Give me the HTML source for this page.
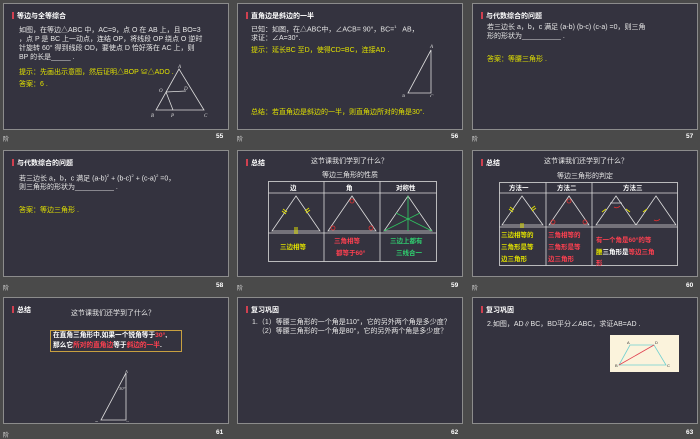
<!DOCTYPE html>
<html><head><meta charset="utf-8"><style>
*{margin:0;padding:0;box-sizing:border-box}
body{width:700px;height:438px;background:#4a4a4a;position:relative;overflow:hidden;font-family:"Liberation Sans","Noto Sans CJK SC",sans-serif;color:#e8e8e8}
.s{position:absolute;width:226px;height:127px;background:#34333f;border:1px solid #8c8c8c}
.s div,.s svg{position:absolute}
.t{font-size:7px;font-weight:bold;color:#fff;left:13px;top:7px}
.bar{position:absolute;left:-5px;top:1px;width:1.5px;height:7px;background:#d04050}
.tx{font-size:7px;line-height:9px;white-space:nowrap;color:#e6e6e6}
.y{color:#e0e000}
.r{color:#ff4050}
.g{color:#30d070}
.f{position:absolute;font-size:6px;color:#ddd}
.n{position:absolute;font-size:6.5px;font-weight:bold;color:#fff}
</style></head><body>

<!-- 55 -->
<div class="s" style="left:3px;top:3px">
<div class="t"><span class="bar"></span>等边与全等综合</div>
<div class="tx" style="left:15px;top:22px">如图，在等边△ABC 中，AC=9，点 O 在 AB 上，且 BO=3<br>，点 P 是 BC 上一动点，连结 OP，将线段 OP 绕点 O 逆时<br>针旋转 60° 得到线段 OD，要使点 D 恰好落在 AC 上，则<br>BP 的长是_____ .</div>
<div class="tx y" style="left:15px;top:64px">提示：先画出示意图，然后证明△BOP ≌△ADO .</div>
<div class="tx y" style="left:15px;top:76px">答案：6 .</div>
<svg style="left:145px;top:60px" width="62" height="55" viewBox="0 0 62 55"><g stroke="#ddd" stroke-width="0.8" fill="none"><path d="M30 5 L7 46 L55 46 Z M17 28 L37 27 M17 28 L24 46"/></g><g fill="#ddd" font-size="5" font-style="italic" font-family="Liberation Serif"><text x="29" y="4">A</text><text x="10" y="28">O</text><text x="35" y="26">D</text><text x="2" y="53">B</text><text x="22" y="53">P</text><text x="55" y="53">C</text></g></svg>
</div>
<div class="f" style="left:3px;top:134px">阶</div><div class="n" style="left:216px;top:133px">55</div>

<!-- 56 -->
<div class="s" style="left:237px;top:3px">
<div class="t"><span class="bar"></span>直角边是斜边的一半</div>
<div class="tx" style="left:13px;top:18px">已知：如图，在△ABC中，∠ACB= 90°，BC=<sup style="font-size:4px">1</sup>&nbsp;&nbsp;&nbsp;AB，<br>求证：∠A=30°.</div>
<div class="tx y" style="left:13px;top:42px">提示：延长BC 至D，使得CD=BC，连接AD .</div>
<svg style="left:160px;top:38px" width="50" height="55" viewBox="0 0 50 55"><g stroke="#ddd" stroke-width="0.8" fill="none"><path d="M33 8 L10 51 L33 51 Z"/></g><g fill="#ddd" font-size="5" font-style="italic" font-family="Liberation Serif"><text x="32" y="6">A</text><text x="4" y="56">B</text><text x="32" y="56">C</text></g></svg>
<div class="tx y" style="left:13px;top:104px">总结：若直角边是斜边的一半，则直角边所对的角是30°.</div>
</div>
<div class="f" style="left:237px;top:134px">阶</div><div class="n" style="left:451px;top:133px">56</div>

<!-- 57 -->
<div class="s" style="left:472px;top:3px">
<div class="t"><span class="bar"></span>与代数综合的问题</div>
<div class="tx" style="left:14px;top:19px">若三边长 a，b，c 满足 (a-b) (b-c) (c-a) =0，则三角<br>形的形状为__________ .</div>
<div class="tx y" style="left:14px;top:51px">答案：等腰三角形 .</div>
</div>
<div class="f" style="left:472px;top:134px">阶</div><div class="n" style="left:686px;top:133px">57</div>

<!-- 58 -->
<div class="s" style="left:3px;top:150px">
<div class="t"><span class="bar"></span>与代数综合的问题</div>
<div class="tx" style="left:15px;top:20px">若三边长 a，b，c 满足 (a-b)<sup style="font-size:4px">2</sup>&nbsp;+ (b-c)<sup style="font-size:4px">2</sup>&nbsp;+ (c-a)<sup style="font-size:4px">2</sup>&nbsp;=0，<br>则三角形的形状为__________ .</div>
<div class="tx y" style="left:15px;top:55px">答案：等边三角形 .</div>
</div>
<div class="f" style="left:3px;top:283px">阶</div><div class="n" style="left:216px;top:282px">58</div>

<!-- 59 -->
<div class="s" style="left:237px;top:150px">
<div class="t"><span class="bar"></span>总结</div>
<div class="tx" style="left:73px;top:6px">这节课我们学到了什么？</div>
<div class="tx" style="left:84px;top:20px">等边三角形的性质</div>
<svg style="left:30px;top:30px" width="170" height="82" viewBox="0 0 170 82"><g stroke="#ddd" stroke-width="0.8" fill="none"><rect x="0.5" y="0.5" width="168" height="80"/><path d="M56 0.5 V80.5 M112 0.5 V80.5 M0.5 12 H168.5 M0.5 52 H168.5"/><path d="M28 15 L4 50 L52 50 Z M84 15 L60 50 L108 50 Z M140 15 L116 50 L164 50 Z"/></g><g stroke="#e0e000" stroke-width="1"><path d="M14 30 l4 3 M15 28 l4 3 M38 32 l4 -3 M37 30 l4 -3 M27 46 v7 M29 46 v7"/></g><g stroke="#e03030" fill="none" stroke-width="0.8"><circle cx="84" cy="20" r="2"/><circle cx="65" cy="47" r="2"/><circle cx="103" cy="47" r="2"/></g><g stroke="#30c060" stroke-width="0.9"><path d="M140 15 V50 M116 50 L152 32 M164 50 L128 32"/></g><g font-size="6.5" font-weight="bold" fill="#fff"><text x="22" y="9">边</text><text x="78" y="9">角</text><text x="128" y="9">对称性</text></g><g font-size="6.5" font-weight="bold"><text x="12" y="68" fill="#e0e000">三边相等</text><text x="66" y="62" fill="#ff4050">三角相等</text><text x="68" y="74" fill="#ff4050">都等于60°</text><text x="122" y="62" fill="#30d070">三边上都有</text><text x="128" y="74" fill="#30d070">三线合一</text></g></svg>
</div>
<div class="f" style="left:237px;top:283px">阶</div><div class="n" style="left:451px;top:282px">59</div>

<!-- 60 -->
<div class="s" style="left:472px;top:150px">
<div class="t"><span class="bar"></span>总结</div>
<div class="tx" style="left:71px;top:6px">这节课我们还学到了什么？</div>
<div class="tx" style="left:84px;top:21px">等边三角形的判定</div>
<svg style="left:26px;top:31px" width="180" height="84" viewBox="0 0 180 84"><g stroke="#ddd" stroke-width="0.8" fill="none"><rect x="0.5" y="0.5" width="178" height="83"/><path d="M47 0.5 V83.5 M93 0.5 V83.5 M0.5 11 H178.5 M0.5 45 H178.5"/><path d="M23 14 L3 43 L44 43 Z M70 14 L50 43 L90 43 Z M117 14 L97 43 L137 43 Z M157 14 L137 43 L177 43 Z M111 21 H123"/></g><g stroke="#e0e000" stroke-width="1"><path d="M10 27 l4 3 M11 25 l4 3 M33 29 l4 -3 M32 27 l4 -3 M22 41 v5 M24 41 v5 M103 30 l4 -3 M127 27 l4 3 M144 30 l4 -3"/></g><g stroke="#e03030" fill="none" stroke-width="0.8"><circle cx="70" cy="19" r="2"/><circle cx="54" cy="40" r="2"/><circle cx="86" cy="40" r="2"/><path d="M115 25 q3 2 6 -1 M155 38 q3 2 6 -1"/></g><g font-size="6.5" font-weight="bold" fill="#fff"><text x="10" y="8">方法一</text><text x="58" y="8">方法二</text><text x="124" y="8">方法三</text></g><g font-size="6.5" font-weight="bold"><text x="2" y="55" fill="#e0e000">三边相等的</text><text x="2" y="67" fill="#e0e000">三角形是等</text><text x="2" y="79" fill="#e0e000">边三角形</text><text x="49" y="55" fill="#ff4050">三角相等的</text><text x="49" y="67" fill="#ff4050">三角形是等</text><text x="49" y="79" fill="#ff4050">边三角形</text><text x="97" y="60" fill="#ff4050">有一个角是60°的等</text><text x="97" y="72"><tspan fill="#e0e000">腰</tspan><tspan fill="#fff">三角形是</tspan><tspan fill="#ff4050">等边三角</tspan></text><text x="97" y="83" fill="#ff4050">形</text></g></svg>
</div>
<div class="f" style="left:472px;top:283px">阶</div><div class="n" style="left:686px;top:282px">60</div>

<!-- 61 -->
<div class="s" style="left:3px;top:297px">
<div class="t"><span class="bar"></span>总结</div>
<div class="tx" style="left:67px;top:11px">这节课我们还学到了什么？</div>
<div style="left:46px;top:32px;width:132px;height:22px;border:1px solid #c8a040;font-size:6.7px;font-weight:bold;line-height:10px;padding-left:2px;white-space:nowrap;color:#fff">在直角三角形中,如果一个锐角等于<span class="r">30°</span>,<br>那么它<span class="r">所对的直角边</span>等于<span class="r">斜边的一半</span>.</div>
<svg style="left:90px;top:72px" width="40" height="52" viewBox="0 0 40 52"><g stroke="#ddd" stroke-width="0.8" fill="none"><path d="M32 3 L7 50 L32 50 Z"/></g><g fill="#ddd" font-size="4.5" font-style="italic" font-family="Liberation Serif"><text x="31" y="3">A</text><text x="25" y="20">30°</text><text x="1" y="54">B</text><text x="32" y="54">C</text></g></svg>
</div>
<div class="f" style="left:3px;top:430px">阶</div><div class="n" style="left:216px;top:429px">61</div>

<!-- 62 -->
<div class="s" style="left:237px;top:297px">
<div class="t"><span class="bar"></span>复习巩固</div>
<div class="tx" style="left:14px;top:20px">1.（1）等腰三角形的一个角是110°，它的另外两个角是多少度？<br>&nbsp;&nbsp;&nbsp;（2）等腰三角形的一个角是80°，它的另外两个角是多少度？</div>
</div>
<div class="n" style="left:451px;top:429px">62</div>

<!-- 63 -->
<div class="s" style="left:472px;top:297px">
<div class="t"><span class="bar"></span>复习巩固</div>
<div class="tx" style="left:14px;top:22px">2.如图，AD∥BC，BD平分∠ABC，求证AB=AD .</div>
<div style="left:137px;top:37px;width:69px;height:37px;background:#fbf3dc"></div>
<svg style="left:137px;top:37px" width="69" height="37" viewBox="0 0 69 37"><path d="M20 10 L44 10 L56 30 L9 30 Z" stroke="#70d0d0" stroke-width="0.8" fill="none"/><path d="M9 30 L44 10" stroke="#e04050" stroke-width="0.8"/><g font-size="4" fill="#333"><text x="17" y="9">A</text><text x="45" y="9">D</text><text x="5" y="32">B</text><text x="57" y="32">C</text></g></svg>
</div>
<div class="n" style="left:686px;top:429px">63</div>

</body></html>
